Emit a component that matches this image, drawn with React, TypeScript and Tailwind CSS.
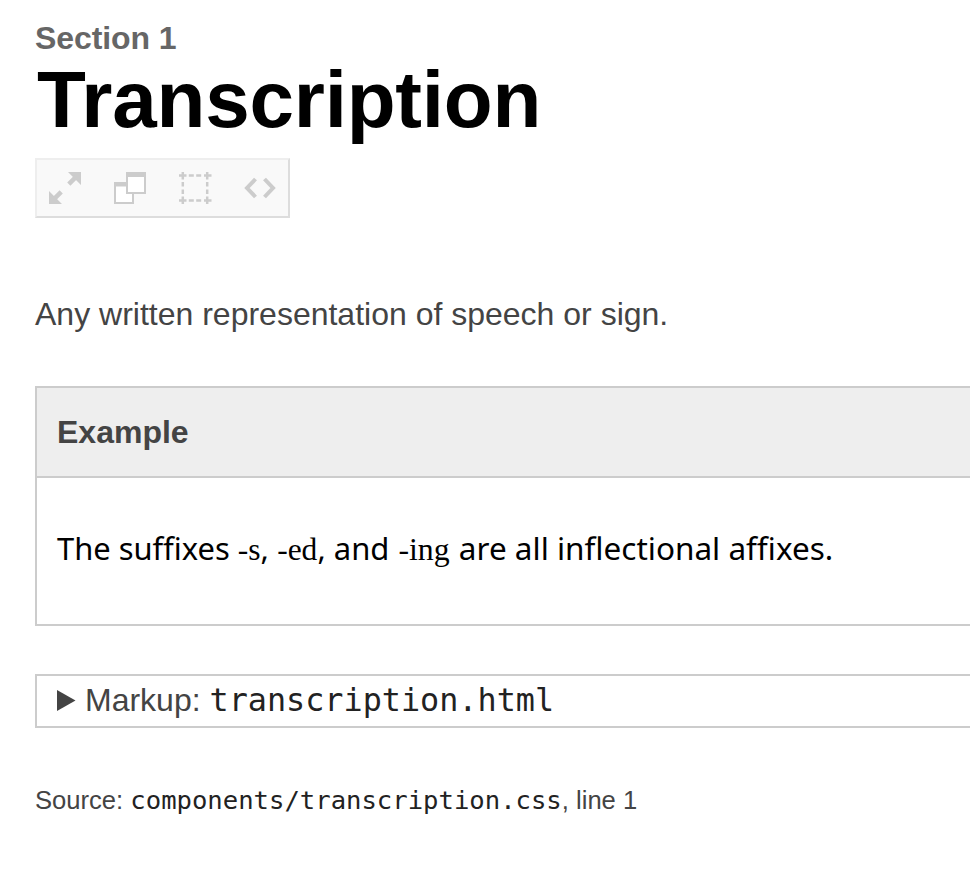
export default function App() {
  return (
    <main className="h-[874px] w-[970px] overflow-hidden bg-white pl-[35px] font-['Liberation_Sans',Arial,sans-serif] text-[#444]">
      <header className="pt-[16px]">
        <p className="h-[44px] text-[32px] leading-[44px] font-bold tracking-[-0.1px] text-[#666]">Section 1</p>
        <h1 className="h-[80px] pl-[2px] text-[80px] leading-[79px] font-bold tracking-[-0.2px] text-black">Transcription</h1>
      </header>
      <nav className="mt-[18px] flex h-[60px] w-[255px] border-2 border-[#eee] border-r-[#ddd] border-b-[#ddd] bg-[#f9f9f9] text-[#ccc]">
        <svg width="251" height="56" viewBox="37 160 251 56" fill="none" stroke="currentColor">
          <path d="M68 172h13v13zM49 191v13h13z" fill="currentColor" stroke="none" />
          <path d="M68.8 184.2l7-7M61.2 191.8l-7 7" strokeWidth="4.5" />
          <path d="M115 183h18v20h-18z" strokeWidth="2" fill="white" />
          <path d="M114 182h20v4.5h-20z" fill="currentColor" stroke="none" />
          <path d="M127 173h18v20h-18z" strokeWidth="2" fill="white" />
          <path d="M126 172h20v5h-20z" fill="currentColor" stroke="none" />
          <path d="M179 175.5h7.5M204 175.5h7.5M179 200.5h7.5M204 200.5h7.5M182.8 172v7.5M207.2 172v7.5M182.8 196.5v7.5M207.2 196.5v7.5M188.8 175.5h5M196.2 175.5h5M188.8 200.5h5M196.2 200.5h5M182.8 182v4.5M182.8 189.5v4.5M207.2 182v4.5M207.2 189.5v4.5" strokeWidth="2.5" />
          <path d="m255.5 179-8.5 9 8.5 9m9-18 8.5 9-8.5 9" strokeWidth="4" />
        </svg>
      </nav>
      <p className="mt-[72px] h-[48px] text-[32px] leading-[48px]">Any written representation of speech or sign.</p>
      <section className="mt-[48px] h-[240px] border-y-2 border-l-2 border-[#ccc]">
        <h2 className="h-[90px] border-b-2 border-[#ccc] bg-[#eee] pl-[20px] text-[32px] leading-[88px] font-bold">Example</h2>
        <p className="pt-[46px] pl-[20px] font-['Noto_Sans',sans-serif] text-[31.4px] leading-[48px] whitespace-nowrap text-black">
          <span className="text-[30.9px]">The suffixes </span>
          <i className="font-['Liberation_Serif',serif] text-[31.5px] not-italic">-s</i>, <i className="font-['Liberation_Serif',serif] text-[31.5px] not-italic">-ed</i>
          <span className="text-[31px]">, and </span>
          <i className="ml-px font-['Liberation_Serif',serif] text-[31.8px] not-italic">-ing</i>
          <span className="ml-px text-[31.5px]"> are all inflectional affixes.</span>
        </p>
      </section>
      <div className="mt-[48px] flex h-[54px] items-center border-y-2 border-l-2 border-[#ccc] pl-[20px] text-[32px]">
        <svg width="19" height="22" viewBox="0 0 19 22" fill="currentColor"><path d="M0 0v21l18.5-10.5z" /></svg>
        <p className="ml-[9px] pb-[2px] leading-[48px]">
          Markup: <code className="font-['DejaVu_Sans_Mono',monospace] text-[31.8px] text-[#222]">transcription.html</code>
        </p>
      </div>
      <p className="mt-[48px] text-[25.6px] leading-[48px]">
        Source: <code className="font-['DejaVu_Sans_Mono',monospace] text-[25.6px] text-[#222]">components/transcription.css</code>, line 1
      </p>
    </main>
  );
}
